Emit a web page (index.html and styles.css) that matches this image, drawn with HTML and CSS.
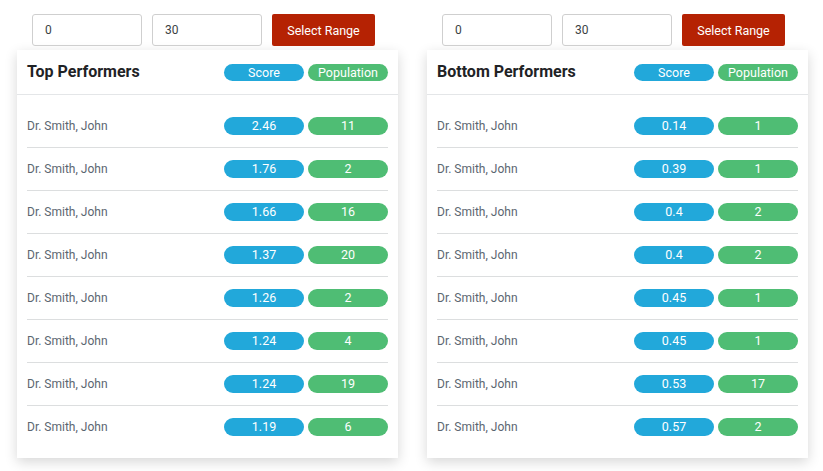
FILE: index.html
```html
<!DOCTYPE html>
<html>
<head>
<meta charset="utf-8">
<link rel="stylesheet" href="styles.css">
</head>
<body>
<div class="page">
  <div class="col">
    <div class="controls">
      <div class="input">0</div>
      <div class="input">30</div>
      <button class="btn">Select Range</button>
    </div>
    <div class="card">
      <div class="card-head">
        <div class="title">Top Performers</div>
        <div class="badges"><span class="badge blue">Score</span><span class="badge green">Population</span></div>
      </div>
      <div class="card-body">
        <div class="row"><span class="name">Dr. Smith, John</span><div class="badges"><span class="badge blue">2.46</span><span class="badge green">11</span></div></div>
        <div class="row"><span class="name">Dr. Smith, John</span><div class="badges"><span class="badge blue">1.76</span><span class="badge green">2</span></div></div>
        <div class="row"><span class="name">Dr. Smith, John</span><div class="badges"><span class="badge blue">1.66</span><span class="badge green">16</span></div></div>
        <div class="row"><span class="name">Dr. Smith, John</span><div class="badges"><span class="badge blue">1.37</span><span class="badge green">20</span></div></div>
        <div class="row"><span class="name">Dr. Smith, John</span><div class="badges"><span class="badge blue">1.26</span><span class="badge green">2</span></div></div>
        <div class="row"><span class="name">Dr. Smith, John</span><div class="badges"><span class="badge blue">1.24</span><span class="badge green">4</span></div></div>
        <div class="row"><span class="name">Dr. Smith, John</span><div class="badges"><span class="badge blue">1.24</span><span class="badge green">19</span></div></div>
        <div class="row"><span class="name">Dr. Smith, John</span><div class="badges"><span class="badge blue">1.19</span><span class="badge green">6</span></div></div>
      </div>
    </div>
  </div>
  <div class="col">
    <div class="controls">
      <div class="input">0</div>
      <div class="input">30</div>
      <button class="btn">Select Range</button>
    </div>
    <div class="card">
      <div class="card-head">
        <div class="title">Bottom Performers</div>
        <div class="badges"><span class="badge blue">Score</span><span class="badge green">Population</span></div>
      </div>
      <div class="card-body">
        <div class="row"><span class="name">Dr. Smith, John</span><div class="badges"><span class="badge blue">0.14</span><span class="badge green">1</span></div></div>
        <div class="row"><span class="name">Dr. Smith, John</span><div class="badges"><span class="badge blue">0.39</span><span class="badge green">1</span></div></div>
        <div class="row"><span class="name">Dr. Smith, John</span><div class="badges"><span class="badge blue">0.4</span><span class="badge green">2</span></div></div>
        <div class="row"><span class="name">Dr. Smith, John</span><div class="badges"><span class="badge blue">0.4</span><span class="badge green">2</span></div></div>
        <div class="row"><span class="name">Dr. Smith, John</span><div class="badges"><span class="badge blue">0.45</span><span class="badge green">1</span></div></div>
        <div class="row"><span class="name">Dr. Smith, John</span><div class="badges"><span class="badge blue">0.45</span><span class="badge green">1</span></div></div>
        <div class="row"><span class="name">Dr. Smith, John</span><div class="badges"><span class="badge blue">0.53</span><span class="badge green">17</span></div></div>
        <div class="row"><span class="name">Dr. Smith, John</span><div class="badges"><span class="badge blue">0.57</span><span class="badge green">2</span></div></div>
      </div>
    </div>
  </div>
</div>
</body>
</html>
```

FILE: styles.css
```css
* { box-sizing: border-box; }
html, body { margin: 0; padding: 0; background: #fff; }
body { font-family: Roboto, "Liberation Sans", sans-serif; color: #23282c; }
.page {
  display: grid;
  grid-template-columns: 381px 381px;
  column-gap: 29px;
  padding: 14px 0 13px 17px;
}
.controls {
  display: flex;
  gap: 10px;
  padding-left: 15px;
  height: 32px;
}
.input {
  width: 110px;
  height: 32px;
  border: 1px solid #cfcfcf;
  border-radius: 3px;
  padding-left: 12px;
  font-size: 12px;
  line-height: 30px;
  color: #3a3f44;
}
.btn {
  width: 103px;
  height: 32px;
  border: 0;
  border-radius: 2px;
  background: #b52203;
  color: #fff;
  font-family: Roboto, "Liberation Sans", sans-serif;
  font-size: 12.5px;
  padding: 0;
}
.card {
  margin-top: 4px;
  background: #fff;
  box-shadow: 0 4px 12px rgba(0,0,0,0.16);
  padding: 0 10px 10px;
}
.card-head {
  height: 45px;
  border-bottom: 1px solid #e4e6e8;
  display: flex;
  align-items: center;
  justify-content: space-between;
  margin: 0 -10px;
  padding: 0 10px;
}
.title {
  font-size: 16px;
  font-weight: 700;
  color: #1f2326;
  margin-top: -1px;
}
.badges { display: flex; gap: 4px; }
.badge {
  width: 80px;
  height: 18px;
  border-radius: 9px;
  color: #fff;
  font-size: 12.5px;
  line-height: 18px;
  text-align: center;
}
.card-head .badge { height: 17px; line-height: 17px; }
.blue { background: #22a8da; }
.green { background: #4fbd74; }
.card-body { padding-top: 10px; }
.row {
  height: 43px;
  display: flex;
  align-items: center;
  justify-content: space-between;
  border-bottom: 1px solid #dcdedf;
}
.row:last-child { border-bottom: 0; height: 42px; }
.name {
  font-size: 12px;
  color: #5b6670;
}
```
